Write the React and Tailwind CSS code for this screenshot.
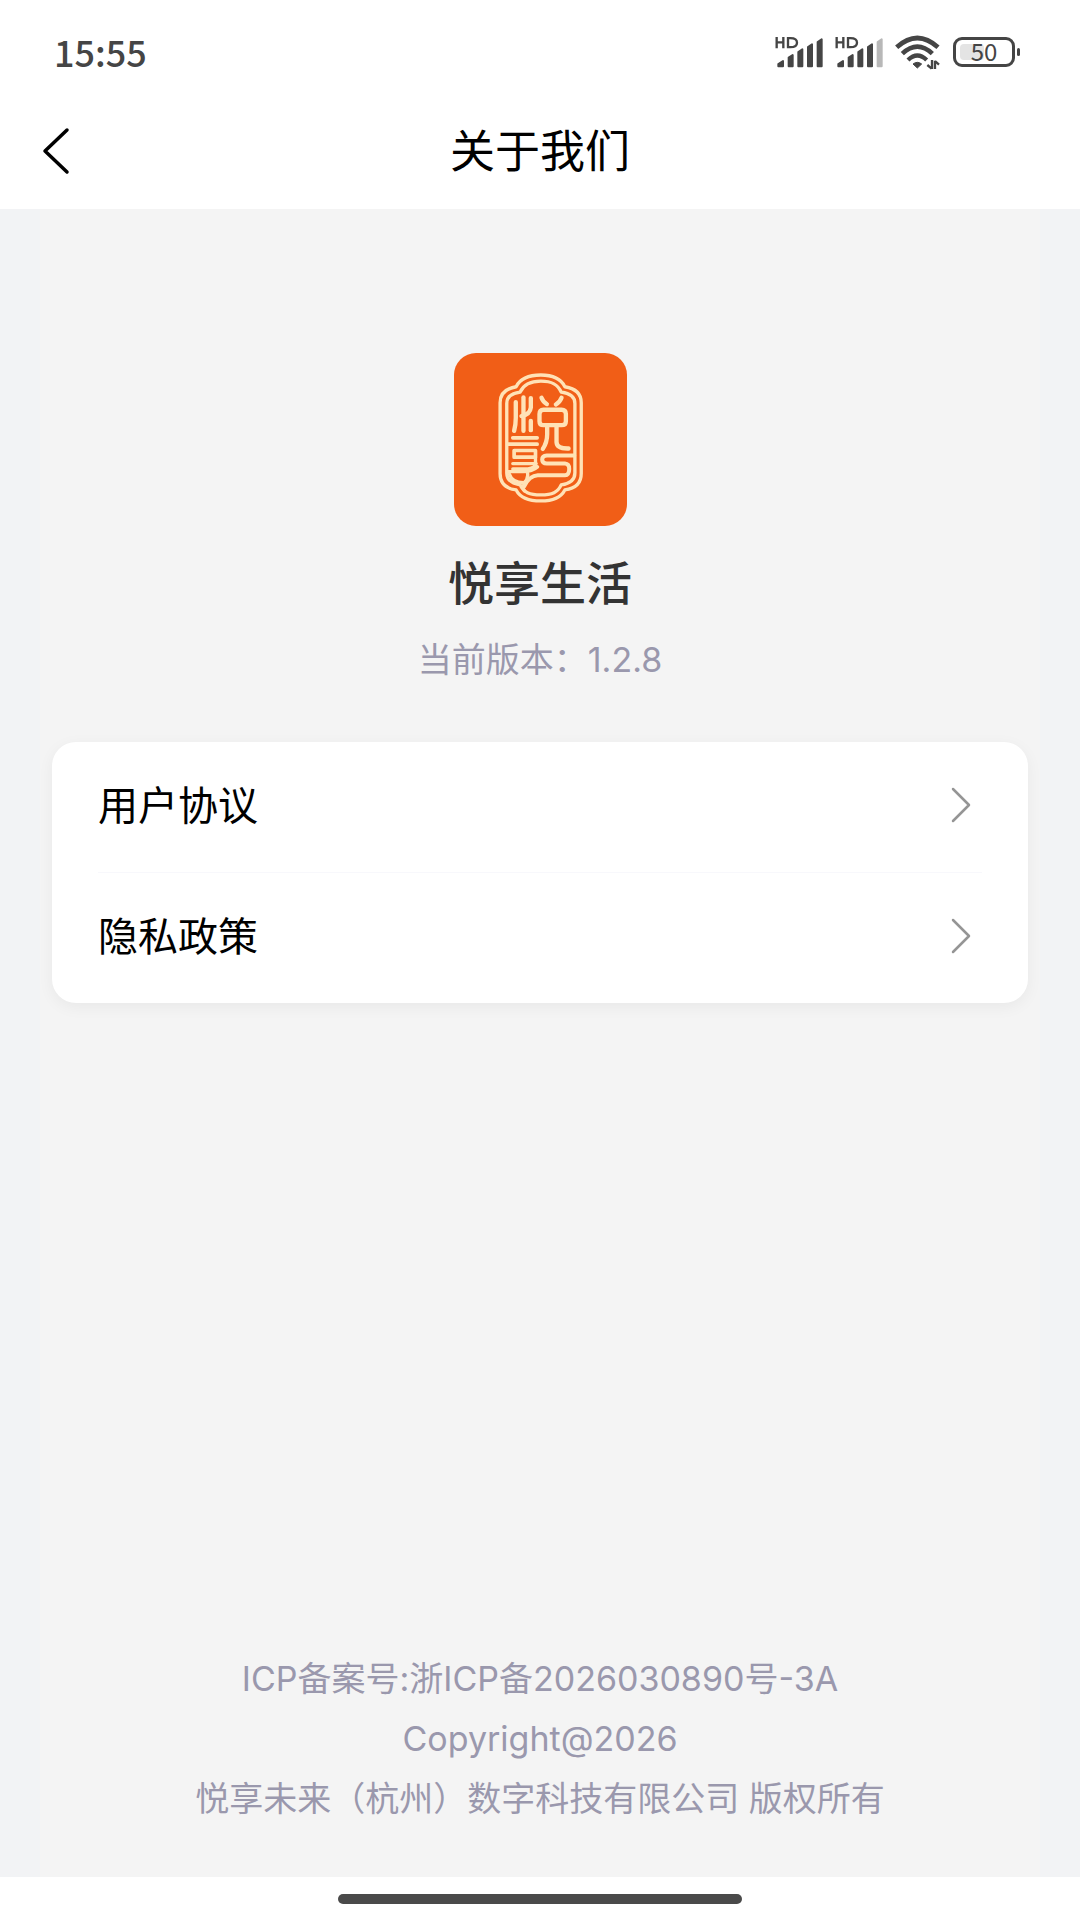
import React from 'react';

const links = [
  { name: '用户协议', href: '#agreement' },
  { name: '隐私政策', href: '#privacy' },
];

const legalLines = [
  'ICP备案号:浙ICP备2026030890号-3A',
  'Copyright@2026',
  '悦享未来（杭州）数字科技有限公司 版权所有',
];

// Barras de cobertura; la última puede quedar apagada
function Signal({ lastBar }) {
  return (
    <svg viewBox="0 0 144 96" className="w-12 h-8" fill="#454545" stroke="#454545">
      <g fill="none" strokeWidth="7">
        <path d="M5 3V37M25 3V37M5 19H25" />
        <path d="M39 6.500H46Q66 6.500 66 20Q66 33.500 46 33.500H39Z" />
      </g>
      <g strokeWidth="6" strokeLinejoin="round">
        <path d="M10 91V84L24 75V91Z" />
        <path d="M41 91V65L53 57V91Z" />
        <path d="M70 91V48L82 40V91Z" />
        <path d="M99 91V33L111 25V91Z" />
        <path d="M128 91V18L140 10V91Z" fill={lastBar} stroke={lastBar} />
      </g>
    </svg>
  );
}

function Wifi() {
  return (
    <svg viewBox="0 0 138 105" className="w-[46px] h-[35px]" fill="none" stroke="#454545">
      <path d="M5 37Q67 -19 129 37" strokeWidth="14" />
      <path d="M22 56Q67 14 112 56" strokeWidth="14" />
      <path d="M39 75Q67 48 95 75" strokeWidth="13" />
      <path d="M54 87Q67 77 80 87L67 99Z" fill="#454545" strokeWidth="3" />
      <path d="M111 75V102M110 101L97 90M120 102V77M120 78L132 89" strokeWidth="7" />
    </svg>
  );
}

function Battery() {
  return (
    <div className="flex items-center gap-0.5">
      <div className="relative flex h-[30px] w-[62px] items-center justify-center rounded-[9px] border-3 border-[#454545]">
        <span className="absolute inset-y-1 left-1 w-6 rounded-sm bg-[#e4e4e4]" />
        <span className="relative pb-0.5 text-[24px] leading-none text-[#454545]">50</span>
      </div>
      <span className="h-2 w-[3px] rounded-full bg-[#454545]" />
    </div>
  );
}

// Sello naranja de la marca
function Logo() {
  return (
    <svg viewBox="42 39 518 518" className="size-[173px] rounded-[22px] bg-[#f15e17]" fill="none" stroke="#ffe2b6" strokeLinecap="round" strokeLinejoin="round">
      <g strokeWidth="10">
        <path d="M180 188C180 158 198 145 228 140C240 116 266 105 302 105C338 105 362 116 374 140C404 145 423 158 423 188V400C423 430 404 445 374 449C362 472 338 482 302 482C266 482 240 472 228 449C198 445 180 430 180 400Z" />
        <path d="M200 190C200 168 216 159 240 156C250 133 268 123 302 123C336 123 353 133 363 156C387 159 404 168 404 190V398C404 420 387 430 363 434C353 456 336 464 302 464C268 464 250 456 240 434C216 430 200 420 200 398Z" />
      </g>
      <g strokeWidth="13">
        <path d="M227 186V233Q227 254 222 272" />
        <path d="M250 172V272" />
        <path d="M272 174V202Q270 222 244 228" />
        <path d="M272 242V270" />
        <path d="M304 173Q309 186 320 192M364 173Q358 188 347 193" />
        <path d="M310 209H364Q377 209 377 222V243Q377 255 364 255H310Q298 255 298 243V222Q298 209 310 209Z" />
        <path d="M321 257V282Q321 306 308 326" />
        <path d="M349 257V306Q350 326 385 325" />
        <path d="M218 293H291M204 312H291" strokeWidth="11" />
        <path d="M222 331H286V351H222V331Z" strokeWidth="11" />
        <path d="M218 370H286V352M288 370Q286 382 264 386H218M204 394H250Q276 394 292 380" strokeWidth="10" />
        <path d="M262 398Q266 414 251 429Q244 441 253 452M208 402Q216 427 250 427" strokeWidth="10" />
        <path d="M402 346H320Q306 347 306 358Q306 370 320 370H374Q387 371 387 386Q387 404 374 405H293Q268 406 252 438" strokeWidth="12" />
      </g>
    </svg>
  );
}

export default function App() {
  return (
    <div className="flex min-h-screen flex-col bg-white font-['Noto_Sans_CJK_SC',sans-serif] text-black">
      {/* Barra de estado */}
      <div className="flex h-24 items-center justify-between pt-2 pr-[60px] pl-[54px]">
        <span className="pb-0.5 text-[36px] font-medium leading-none text-[#454545]">15:55</span>
        <div className="flex items-center gap-3">
          <Signal lastBar="#454545" />
          <Signal lastBar="#b8b8b8" />
          <Wifi />
          <Battery />
        </div>
      </div>

      {/* Cabecera */}
      <header className="grid h-[113px] grid-cols-[1fr_auto_1fr] items-center px-10 pb-1">
        <button type="button" aria-label="返回" className="justify-self-start">
          <svg viewBox="0 0 32 48" className="h-12 w-8" fill="none" stroke="black" strokeWidth="3.500" strokeLinecap="round" strokeLinejoin="round">
            <path d="M27 3L5 24L27 45" />
          </svg>
        </button>
        <h1 className="pb-1 text-[45px] leading-none">关于我们</h1>
      </header>

      <div className="flex grow flex-col bg-[#f2f3f5] px-10">
        <main className="flex grow flex-col bg-[#f4f4f4] px-3">
          <section className="flex flex-col items-center pt-36">
            <Logo />
            <h2 className="mt-[22px] text-[46px] leading-[64px] font-medium text-[#333333]">悦享生活</h2>
            <p className="mt-6 font-['Inter','Noto_Sans_CJK_SC',sans-serif] text-[34px] leading-[48px] text-[#9a98ad]">当前版本：1.2.8</p>
          </section>

          <nav className="mt-[58px] rounded-3xl bg-white px-[46px] shadow-[0_4px_16px_rgba(0,0,0,0.05)]">
            <ul className="divide-y divide-[#f8f8fc]">
              {links.map((item) => (
                <li key={item.name}>
                  <a href={item.href} className="flex h-[130px] items-center justify-between pr-2 pb-1">
                    <span className="pb-1 text-[40px] leading-none">{item.name}</span>
                    <svg viewBox="0 0 24 36" className="h-9 w-6" fill="none" stroke="#959595" strokeWidth="2.500" strokeLinecap="round" strokeLinejoin="round">
                      <path d="M3 2L19 18L3 34" />
                    </svg>
                  </a>
                </li>
              ))}
            </ul>
          </nav>

          <footer className="mt-auto pb-12 text-center font-['Inter','Noto_Sans_CJK_SC',sans-serif] text-[34px] leading-[60px] text-[#9a98ad]">
            {legalLines.map((line) => (
              <p key={line}>{line}</p>
            ))}
          </footer>
        </main>
      </div>

      {/* Indicador de inicio */}
      <div className="flex h-[43px] justify-center pt-[17px]">
        <div className="h-[10px] w-[404px] rounded-full bg-[#4a4a4a]" />
      </div>
    </div>
  );
}
